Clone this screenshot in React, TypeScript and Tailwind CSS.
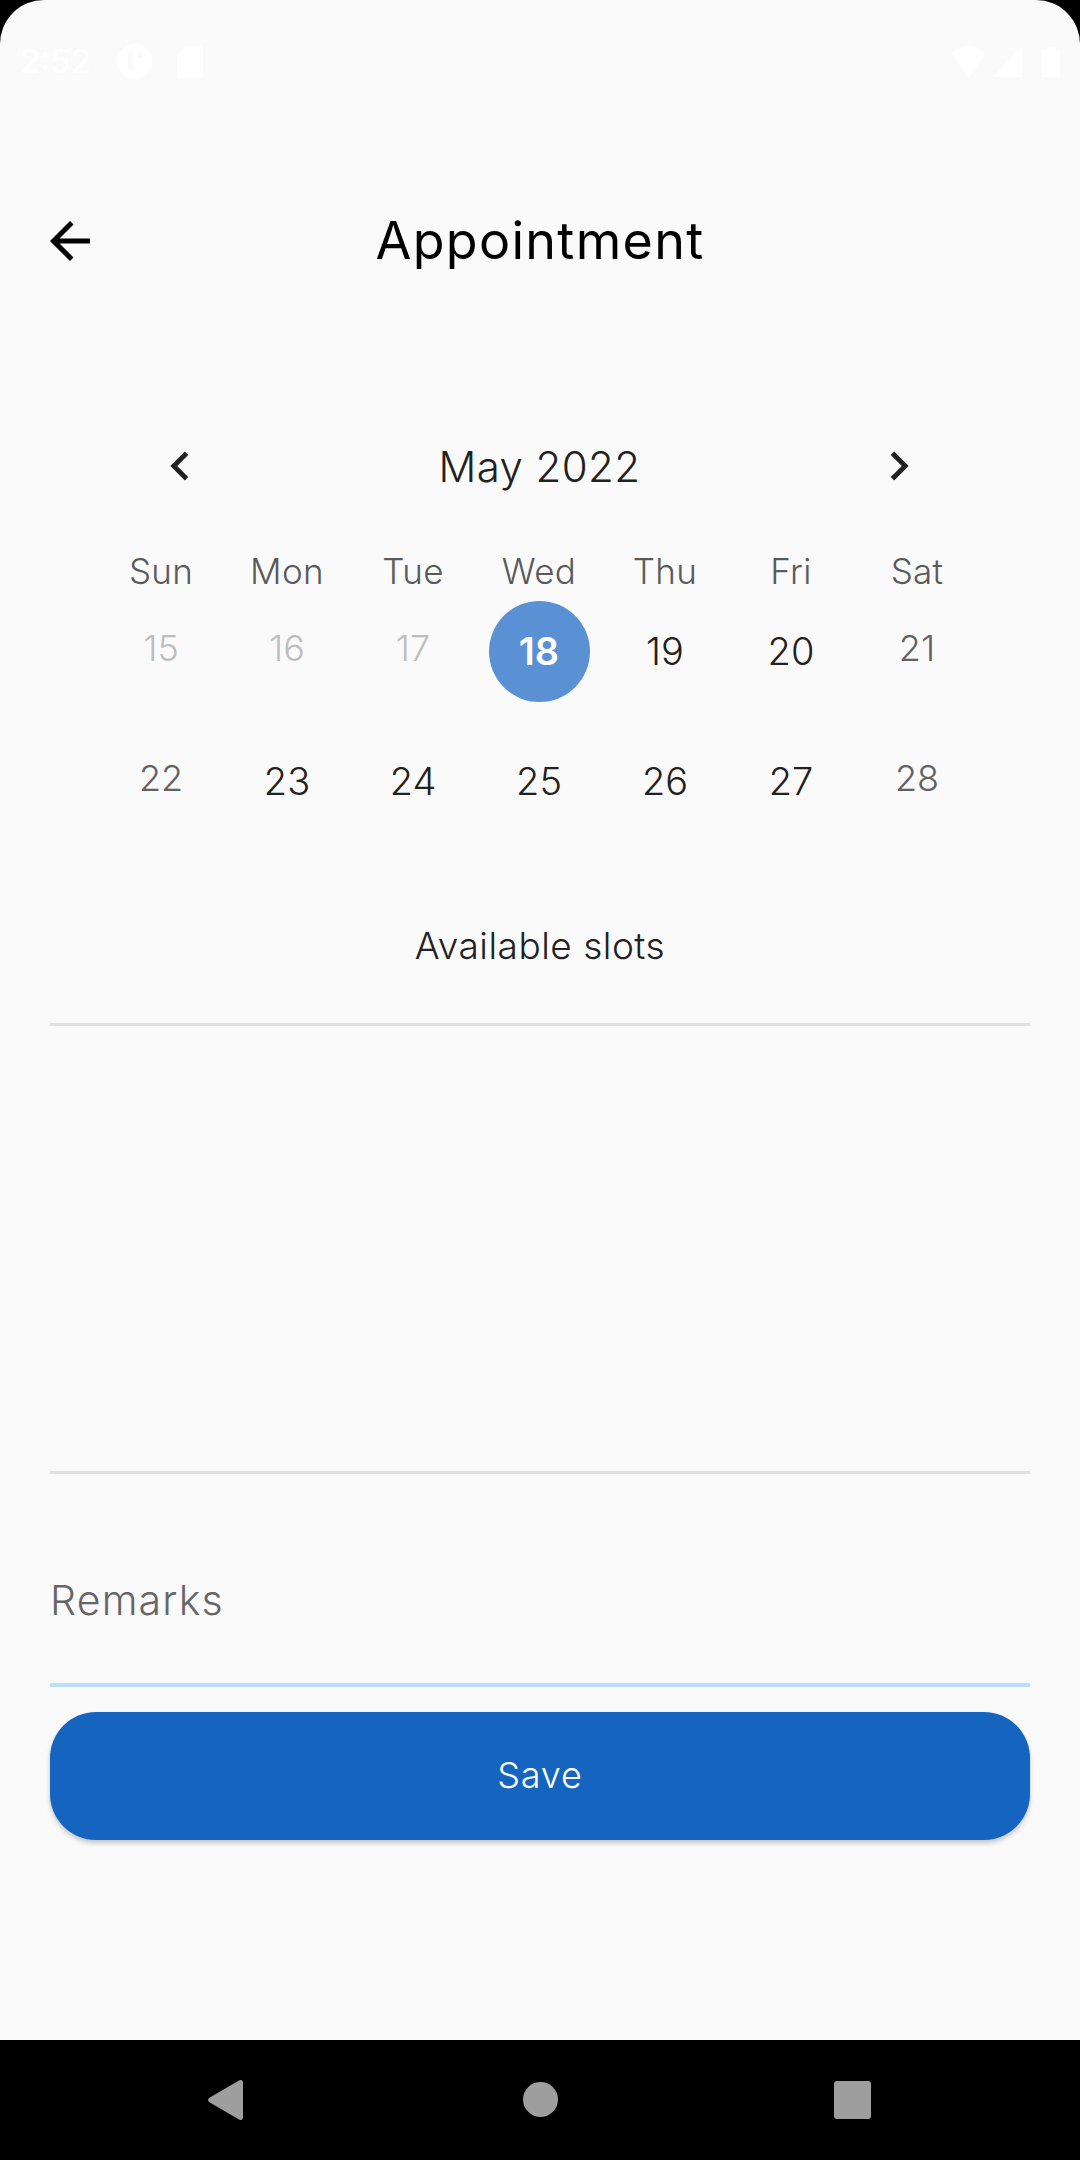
const font = "font-['Inter','Liberation_Sans',sans-serif]";

const weekdays = ["Sun", "Mon", "Tue", "Wed", "Thu", "Fri", "Sat"];

type Day = { n: number; tone: "off" | "muted" | "active" | "selected" };

const weeks: Day[][] = [
  [
    { n: 15, tone: "off" },
    { n: 16, tone: "off" },
    { n: 17, tone: "off" },
    { n: 18, tone: "selected" },
    { n: 19, tone: "active" },
    { n: 20, tone: "active" },
    { n: 21, tone: "muted" },
  ],
  [
    { n: 22, tone: "muted" },
    { n: 23, tone: "active" },
    { n: 24, tone: "active" },
    { n: 25, tone: "active" },
    { n: 26, tone: "active" },
    { n: 27, tone: "active" },
    { n: 28, tone: "muted" },
  ],
];

function StatusBar() {
  return (
    <div className="flex h-[120px] items-center justify-between px-[20px] pt-[3px] text-white">
      <div className="flex items-center">
        <span className="w-[97px] text-[33px] font-medium leading-none">2:52</span>
        <svg width="35" height="35" viewBox="0 0 36 36">
          <circle cx="18" cy="18" r="18" fill="#fff" />
          <rect x="11" y="8" width="6" height="20" rx="3" fill="#fafafa" />
          <circle cx="24" cy="11" r="3" fill="#fafafa" />
        </svg>
        <svg width="26" height="32" viewBox="0 0 26 32" className="ml-[25px]">
          <path d="M9 0h15a2 2 0 0 1 2 2v28a2 2 0 0 1-2 2H2a2 2 0 0 1-2-2V9z" fill="#fff" />
        </svg>
      </div>
      <div className="flex items-center">
        <svg width="33" height="32" viewBox="0 0 33 32">
          <path d="M16.500 32 0 8C5 3 10.500 0 16.500 0S28 3 33 8z" fill="#fff" />
        </svg>
        <svg width="29" height="30" viewBox="0 0 29 30" className="ml-[8px]">
          <path d="M29 0v30H0z" fill="#fff" />
        </svg>
        <svg width="18" height="30" viewBox="0 0 18 30" className="ml-[20px]">
          <path d="M5 3V0h8v3h3a2 2 0 0 1 2 2v25H0V5a2 2 0 0 1 2-2z" fill="#fff" />
        </svg>
      </div>
    </div>
  );
}

function DayCell({ day }: { day: Day }) {
  if (day.tone === "selected") {
    return (
      <div className="flex h-[100px] items-center justify-center">
        <div className="flex h-[101px] w-[101px] shrink-0 items-center justify-center rounded-full bg-[#5a90d4] text-[38px] font-semibold text-white">
          {day.n}
        </div>
      </div>
    );
  }
  const tone =
    day.tone === "off"
      ? "text-[#bdbdbd] -translate-y-[3px] text-[36px] font-light"
      : day.tone === "muted"
        ? "text-[#616161] -translate-y-[3px] text-[36px] font-light"
        : "text-[#212121] text-[38px] font-[350]";
  return <div className={`flex h-[100px] items-center justify-center ${tone}`}>{day.n}</div>;
}

export default function App() {
  return (
    <div className={`relative flex h-[2160px] w-[1080px] flex-col overflow-hidden bg-black ${font}`}>
      <div className="flex flex-1 flex-col rounded-t-[44px] bg-[#fafafa]">
        <StatusBar />

        <header className="relative mt-[50px] flex h-[140px] items-center justify-center pt-[2px]">
          <svg width="60" height="60" viewBox="0 0 24 24" className="absolute left-[40px] top-[41px]" fill="#000">
            <path d="M20 11H7.830l5.590-5.590L12 4l-8 8 8 8 1.410-1.410L7.830 13H20v-2z" />
          </svg>
          <h1 className="text-[52px] font-normal leading-none tracking-[1.3px] text-black">Appointment</h1>
        </header>

        <section className="mt-[126px] pl-[98px] pr-[100px]">
          <div className="flex h-[60px] items-center justify-between pl-[53px] pr-[52px] text-[#212121]">
            <svg width="58" height="58" viewBox="0 0 24 24" fill="#212121">
              <path d="M15.410 7.410 14 6l-6 6 6 6 1.410-1.410L10.830 12z" />
            </svg>
            <span className="text-[42px] font-[350] tracking-[0.4px]">May 2022</span>
            <svg width="58" height="58" viewBox="0 0 24 24" fill="#212121">
              <path d="M10 6 8.590 7.410 13.170 12l-4.580 4.590L10 18l6-6z" />
            </svg>
          </div>

          <div className="mt-[49px] grid h-[50px] grid-cols-7 items-center text-center text-[35px] font-light tracking-[0.3px] text-[#5a5a5a]">
            {weekdays.map((d) => (
              <span key={d}>{d}</span>
            ))}
          </div>

          <div className="mt-[6px] flex flex-col gap-[30px]">
            {weeks.map((week) => (
              <div key={week[0].n} className="grid grid-cols-7">
                {week.map((day) => (
                  <DayCell key={day.n} day={day} />
                ))}
              </div>
            ))}
          </div>
        </section>

        <p className="mt-[96px] text-center text-[37px] font-[350] leading-none tracking-[0.5px] text-[#212121]">
          Available slots
        </p>

        <div className="mx-[50px] mt-[59px] h-[451px] border-y-[3px] border-[#e0e0e0]" />

        <div className="mx-[50px] mt-[47px] flex h-[166px] items-center border-b-4 border-[#bbdefb] pb-[3px] text-[41px] font-light tracking-[1.2px] text-[#666666]">
          Remarks
        </div>

        <button className="mx-[50px] mt-[25px] flex h-[128px] items-center justify-center rounded-[46px] bg-[#1565c0] pb-[2px] text-[36px] font-[350] tracking-[0.8px] text-white shadow-[0_3px_5px_rgba(0,0,0,0.22)]">
          Save
        </button>

        <div className="flex-1" />
      </div>

      <nav className="relative h-[120px] bg-black">
        <svg width="35" height="40" viewBox="0 0 35 40" className="absolute left-[208px] top-[40px]">
          <path d="M1 22a3 3 0 0 1 0-4L31 .5a2.500 2.500 0 0 1 4 2v35a2.500 2.500 0 0 1-4 2z" fill="#9e9e9e" />
        </svg>
        <div className="absolute left-[523px] top-[42px] h-[35px] w-[35px] rounded-full bg-[#9e9e9e]" />
        <div className="absolute left-[834px] top-[41px] h-[38px] w-[37px] rounded-[3px] bg-[#9e9e9e]" />
      </nav>
    </div>
  );
}
